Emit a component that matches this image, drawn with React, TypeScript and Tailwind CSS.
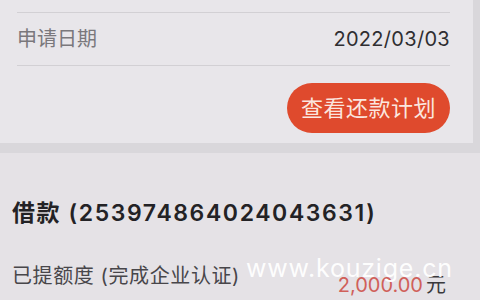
import React from 'react';

const font = { fontFamily: '"Inter", "Noto Sans CJK SC", sans-serif' };

export default function App() {
  return (
    <div className="relative w-[480px] h-[300px] overflow-hidden bg-[#d9d7db]" style={font}>
      {/* detail card */}
      <div className="w-[473px] bg-[#e8e6ea] px-[17px] pr-[23px]">
        <div className="h-[13px] border-b border-[#d2d0d4]" />
        <div className="h-[53px] flex items-center justify-between border-b border-[#d2d0d4]">
          <span className="text-[20px] text-[#7a787c]">申请日期</span>
          <span className="text-[20px] text-[#2f2e31] tracking-[0.3px]">2022/03/03</span>
        </div>
        <div className="h-[77px] flex items-start justify-end pt-[17px]">
          <button className="h-[50px] w-[163px] rounded-full bg-[#df4a2d] text-[#fbe6df] text-[22px] tracking-[0.5px]">
            查看还款计划
          </button>
        </div>
      </div>

      {/* loan card */}
      <div className="mt-[10px] h-[200px] bg-[#e5e2e6] px-[12px] pt-[43px]">
        <div className="text-[23px] font-semibold text-[#232225] tracking-[1.6px]">
          借款 (253974864024043631)
        </div>
        <div className="mt-[30px] flex items-start justify-between pr-[22px]">
          <span className="text-[20px] text-[#48464a] tracking-[0.6px]">已提额度 (完成企业认证)</span>
          <span className="text-[20px] mt-[9px]">
            <span className="text-[#d0605a]">2,000.00</span>
            <span className="text-[#3a393c] ml-[3px]">元</span>
          </span>
        </div>
      </div>

      {/* watermark */}
      <div className="absolute left-[246px] top-[250px] text-[25px] text-white tracking-[0.8px] opacity-95">
        www.kouzige.cn
      </div>
    </div>
  );
}
